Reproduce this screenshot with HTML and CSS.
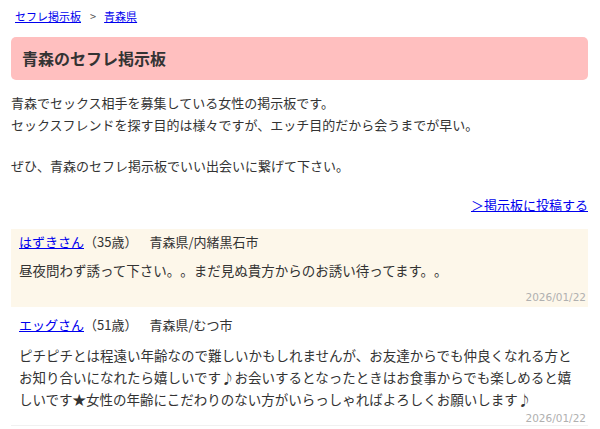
FILE: index.html
```html
<!DOCTYPE html>
<html lang="ja">
<head>
<meta charset="utf-8">
<title>青森のセフレ掲示板</title>
<link rel="stylesheet" href="styles.css">
</head>
<body>
<nav class="breadcrumb"><a href="#">セフレ掲示板</a><span class="sep">&gt;</span><a href="#">青森県</a></nav>
<h1 class="title">青森のセフレ掲示板</h1>
<div class="intro">
<p>青森でセックス相手を募集している女性の掲示板です。<br>セックスフレンドを探す目的は様々ですが、エッチ目的だから会うまでが早い。</p>
<p>ぜひ、青森のセフレ掲示板でいい出会いに繋げて下さい。</p>
</div>
<div class="post-link"><a href="#">＞掲示板に投稿する</a></div>
<div class="posts">
<article class="post odd">
<div class="meta"><a href="#">はずきさん</a><span class="age">（35歳）</span><span class="area">青森県/内緒黒石市</span></div>
<p class="body">昼夜問わず誘って下さい。。まだ見ぬ貴方からのお誘い待ってます。。</p>
<div class="date">2026/01/22</div>
</article>
<article class="post">
<div class="meta"><a href="#">エッグさん</a><span class="age">（51歳）</span><span class="area">青森県/むつ市</span></div>
<p class="body">ピチピチとは程遠い年齢なので難しいかもしれませんが、お友達からでも仲良くなれる方とお知り合いになれたら嬉しいです♪お会いするとなったときはお食事からでも楽しめると嬉しいです★女性の年齢にこだわりのない方がいらっしゃればよろしくお願いします♪</p>
<div class="date">2026/01/22</div>
</article>
</div>
</body>
</html>
```
FILE: styles.css
```css
html, body {
  margin: 0;
  padding: 0;
  background: #fff;
}
body {
  padding: 0 12px 0 11px;
  font-family: "Noto Sans CJK JP", "Noto Sans", sans-serif;
  color: #333;
  text-spacing-trim: space-all;
}
a {
  color: #0000ee;
  text-decoration: underline;
}
.breadcrumb {
  padding: 8px 4px 0;
  font-size: 11px;
  line-height: 16px;
}
.breadcrumb .sep {
  color: #555;
  margin: 0 8px 0 9px;
}
.title {
  margin: 13px 0 0;
  padding: 10px 11px;
  background: #ffbfbf;
  border-radius: 5px;
  font-size: 16px;
  line-height: 23px;
  font-weight: bold;
  color: #333;
}
.intro {
  font-size: 13px;
  line-height: 22px;
}
.intro p {
  margin: 12px 0 0;
}
.intro p + p {
  margin-top: 19px;
}
.post-link {
  margin-top: 17px;
  text-align: right;
  font-size: 13px;
  line-height: 22px;
}
.posts {
  margin-top: 13px;
}
.post {
  padding: 4px 2px 2px 8px;
  border-bottom: 1px solid #f1f1f1;
}
.post.odd {
  background: #fdf7ea;
  border-bottom-color: #fdf7ea;
}
.post + .post {
  padding-top: 9px;
  padding-bottom: 0;
}
.meta {
  font-size: 13px;
  line-height: 18px;
}
.meta .area {
  margin-left: 12px;
}
.body {
  margin: 8px 0 0;
  padding-right: 6px;
  font-size: 13.5px;
  line-height: 22px;
}
.post + .post .body {
  margin-top: 10px;
}
.date {
  margin-top: 9px;
  text-align: right;
  font-family: "DejaVu Sans", sans-serif;
  font-size: 10.5px;
  line-height: 14px;
  color: #b0b0b0;
}
.post + .post .date {
  margin-top: 1px;
}
```
